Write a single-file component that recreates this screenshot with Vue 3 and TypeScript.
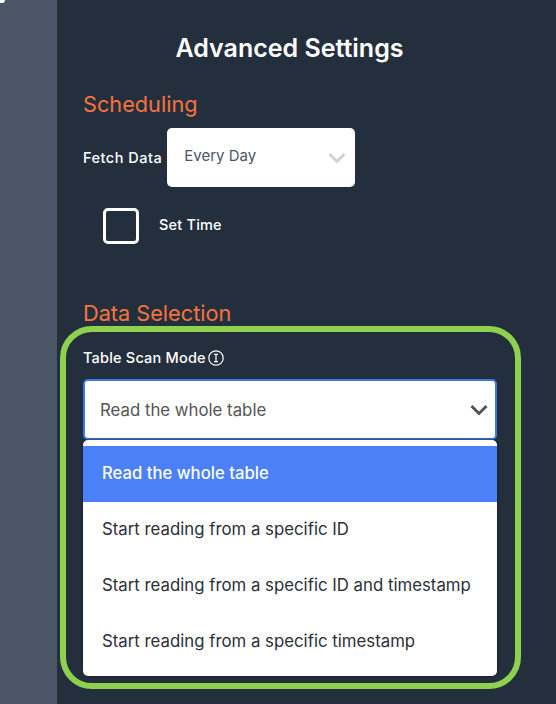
<script setup lang="ts">
const options: string[] = [
  'Read the whole table',
  'Start reading from a specific ID',
  'Start reading from a specific ID and timestamp',
  'Start reading from a specific timestamp',
]
</script>

<template>
  <div class="page">
    <aside class="rail"><span class="corner"></span></aside>
    <main class="main">
      <h1 class="title">Advanced Settings</h1>
      <h2 class="section first">Scheduling</h2>
      <div class="fetch">
        <span class="label fetch-label">Fetch Data</span>
        <div class="small-select">
          <span>Every Day</span>
          <svg class="chev-light" width="20" height="12" viewBox="0 0 20 12"><path d="M2.5 2 L10 9.5 L17.5 2" fill="none" stroke="#d2d2d2" stroke-width="3"/></svg>
        </div>
      </div>
      <div class="time">
        <span class="box"></span>
        <span class="label time-label">Set Time</span>
      </div>
      <h2 class="section second">Data Selection</h2>
      <section class="highlight">
        <div class="mode">
          <span class="label">Table Scan Mode</span>
          <svg class="info" width="16" height="16" viewBox="0 0 16 16">
            <circle cx="8" cy="8" r="7.2" fill="none" stroke="#fff" stroke-width="1.2"/>
            <path d="M6 4.4h4M8 4.4v7.2M6 11.6h4" fill="none" stroke="#fff" stroke-width="1.2"/>
          </svg>
        </div>
        <div class="select">
          <span>Read the whole table</span>
          <svg width="20" height="12" viewBox="0 0 20 12"><path d="M2.5 2 L10 9.5 L17.5 2" fill="none" stroke="#555" stroke-width="3"/></svg>
        </div>
        <ul class="menu">
          <li v-for="(o, i) in options" :key="o" class="item" :class="{ active: i === 0 }">{{ o }}</li>
        </ul>
      </section>
    </main>
  </div>
</template>

<style scoped>
.page {
  display: flex;
  width: 556px;
  height: 704px;
  overflow: hidden;
  background: #242f3e;
  font-family: Inter, Roboto, "Liberation Sans", sans-serif;
}
.rail {
  width: 57px;
  flex: none;
  background: #4a5568;
  position: relative;
}
.corner {
  position: absolute;
  left: 0;
  top: 0;
  width: 5px;
  height: 3px;
  background: #fff;
  border-bottom-right-radius: 5px;
}
.main {
  flex: 1;
  min-width: 0;
  padding-left: 26px;
}
.title {
  margin: 33px 0 0;
  width: 413px;
  text-align: center;
  color: #fff;
  font-size: 25px;
  line-height: 30px;
  font-weight: 600;
}
.section {
  margin: 0;
  color: #f7733f;
  font-size: 21.7px;
  line-height: 26px;
  font-weight: 400;
}
.first { margin-top: 28px; }
.second { margin-top: 56px; }
.label {
  color: #fff;
  font-size: 14.5px;
  font-weight: 500;
  line-height: 18px;
  letter-spacing: 0.2px;
  white-space: nowrap;
}
.fetch-label { letter-spacing: 0.5px; }
.time-label { padding-bottom: 2px; }
.fetch {
  display: flex;
  align-items: center;
  gap: 5px;
  margin-top: 11px;
}
.small-select {
  box-sizing: border-box;
  width: 188px;
  height: 59px;
  background: #fff;
  border-radius: 5px;
  padding: 18px 8px 0 17px;
  display: flex;
  justify-content: space-between;
  align-items: flex-start;
  color: #4a5568;
  font-size: 15px;
  line-height: 20px;
}
.chev-light { margin-top: 6px; }
.time {
  display: flex;
  align-items: center;
  gap: 20px;
  margin: 21px 0 0 20px;
}
.box {
  box-sizing: border-box;
  width: 36px;
  height: 36px;
  border: 3px solid #fff;
  border-radius: 5px;
}
.highlight {
  box-sizing: border-box;
  width: 461px;
  height: 363px;
  margin: 0 0 0 -23px;
  padding: 17px 18px 0 17px;
  border: 6px solid #8fd14f;
  border-radius: 32px;
}
.mode {
  display: flex;
  align-items: center;
  gap: 2px;
  height: 18px;
}
.select {
  box-sizing: border-box;
  height: 61px;
  margin-top: 12px;
  width: 414px;
  background: #fff;
  border: 2px solid #3f78e0;
  border-radius: 5px;
  padding: 0 6px 0 15px;
  display: flex;
  align-items: center;
  justify-content: space-between;
  color: #555;
  font-size: 16.8px;
}
.menu {
  list-style: none;
  margin: 0;
  padding: 6px 0 0;
  width: 414px;
  background: #fff;
  border-radius: 5px;
  box-sizing: border-box;
  height: 236px;
  box-shadow: 0 0 3px #11151d;
}
.item {
  box-sizing: border-box;
  height: 56px;
  display: flex;
  align-items: center;
  padding: 0 0 2px 19px;
  color: #2b2f38;
  font-size: 16.8px;
}
.item:last-child { height: 55px; }
.active {
  background: #4b80f8;
  color: #fff;
  font-weight: 500;
  font-size: 16.7px;
}
</style>
